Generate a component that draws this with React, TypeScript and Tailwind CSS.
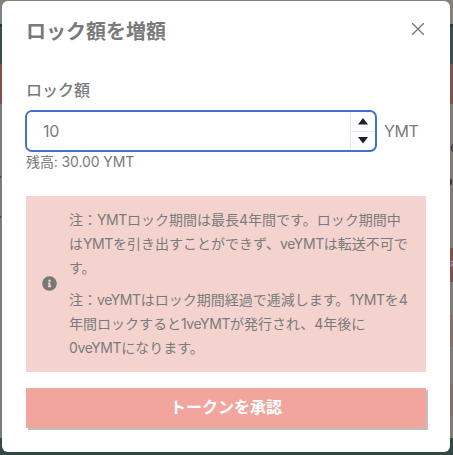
import { useState, type ReactNode } from "react";

function Backdrop() {
  return (
    <div aria-hidden="true" className="absolute inset-0 flex flex-col bg-[#7d7c76]">
      <div className="h-6 bg-[#82817b]" />
      <div className="h-10 border-t-[3px] border-[#263a37] bg-[#36504a]" />
      <div className="h-10 bg-[#80524e]" />
      <div className="relative flex-1 overflow-hidden text-[14px] text-[#333]">
        <span className="absolute top-[32px] left-[450px]">e</span>
        <span className="absolute top-[74px] left-[444px] size-2 rounded-full bg-[#333]" />
        <span className="absolute top-[66px] left-[-12px]">ア</span>
        <span className="absolute top-[106px] left-[-12px]">ア</span>
        <div className="absolute top-[144px] right-0 h-[34px] w-4 bg-[#82504c]" />
        <span className="absolute top-[150px] left-[449px] text-[#aaa]">を</span>
        <div className="absolute top-[211px] right-0 h-8 w-4 bg-[#857069]" />
        <div className="absolute top-[280px] right-0 h-8 w-4 bg-[#857069]" />
      </div>
      <div className="h-[17px] bg-[#334842]" />
    </div>
  );
}

function Latin({ children }: { children: ReactNode }) {
  return <span className="tracking-[-0.4px]">{children}</span>;
}

function AmountField() {
  const [amount, setAmount] = useState(10);
  return (
    <div className="flex items-center">
      <div className="flex h-[42px] w-[352px] -translate-x-px overflow-hidden rounded-[7px] border-2 border-[#3f72c8]">
        <input
          aria-label="ロック額"
          className="min-w-0 flex-1 bg-white pl-4 text-[16px] tracking-[-0.3px] outline-none"
          value={amount}
          onChange={(e) => setAmount(Number(e.target.value) || 0)}
        />
        <div className="flex w-[25px] flex-col border-l border-[#e2e8f0]">
          <button aria-label="増やす" className="flex flex-1 items-center justify-center" onClick={() => setAmount(amount + 1)}>
            <svg width="10" height="7" viewBox="0 0 10 7" fill="#1a202c"><path d="M5 0 10 6.5H0Z" /></svg>
          </button>
          <button aria-label="減らす" className="flex flex-1 items-center justify-center border-t border-[#e2e8f0]" onClick={() => setAmount(Math.max(0, amount - 1))}>
            <svg width="10" height="7" viewBox="0 0 10 7" fill="#1a202c"><path d="M0 0H10L5 6.500Z" /></svg>
          </button>
        </div>
      </div>
      <span className="ml-1.5 text-[16px] tracking-[-0.4px]">YMT</span>
    </div>
  );
}

function Notice() {
  return (
    <div className="mt-6 flex h-[176px] items-center bg-[#f4d3cf] pl-4">
      <svg className="shrink-0 -translate-y-px" width="15" height="15" viewBox="0 0 512 512" fill="#777">
        <path d="M256 8C119 8 8 119 8 256s111 248 248 248 248-111 248-248S393 8 256 8zm0 110a42 42 0 1 1 0 84 42 42 0 0 1 0-84zm56 254c0 6.600-5.400 12-12 12h-88c-6.600 0-12-5.400-12-12v-24c0-6.600 5.400-12 12-12h12v-64h-12c-6.600 0-12-5.400-12-12v-24c0-6.600 5.400-12 12-12h64c6.600 0 12 5.400 12 12v100h12c6.600 0 12 5.400 12 12v24z" />
      </svg>
      <div className="ml-3 flex flex-col gap-2 text-[14px] leading-6 whitespace-nowrap">
        <p>
          注：<Latin>YMT</Latin>ロック期間は最長4年間です。ロック期間中<br />
          は<Latin>YMT</Latin>を引き出すことができず、<Latin>veYMT</Latin>は転送不可で<br />
          す。
        </p>
        <p>
          注：<Latin>veYMT</Latin>はロック期間経過で逓減します。<Latin>1YMT</Latin>を4<br />
          年間ロックすると<Latin>1veYMT</Latin>が発行され、4年後に<br />
          <Latin>0veYMT</Latin>になります。
        </p>
      </div>
    </div>
  );
}

export default function App() {
  return (
    <main
      lang="ja"
      className="relative h-[455px] w-[453px] overflow-hidden pt-px pl-[2px] font-['Inter','Noto_Sans_CJK_JP',sans-serif] text-[#7a7a7a]"
    >
      <Backdrop />
      <section role="dialog" className="relative flex h-[451px] w-[448px] flex-col rounded-[6px] bg-white px-6">
        <header className="flex h-[60px] items-center justify-between">
          <h1 className="mt-0.5 text-[20px] leading-7 font-semibold">ロック額を増額</h1>
          <button aria-label="閉じる" className="mr-0.5 mb-1">
            <svg width="12" height="12" viewBox="0 0 12 12" stroke="#777" strokeWidth="1.3" strokeLinecap="round"><path d="M.5.5l11 11M11.500.5l-11 11" /></svg>
          </button>
        </header>
        <div className="mt-[17px] mb-2 text-[16px] leading-6 font-medium">ロック額</div>
        <AmountField />
        <div className="h-5 text-[14px] leading-5 tracking-[-0.1px]">残高: 30.00 YMT</div>
        <Notice />
        <button className="mt-4 h-10 bg-[#f2a59d] pb-0.5 text-[16px] font-bold text-white shadow-[2px_2px_0_#bfbfbf]">
          トークンを承認
        </button>
      </section>
    </main>
  );
}
